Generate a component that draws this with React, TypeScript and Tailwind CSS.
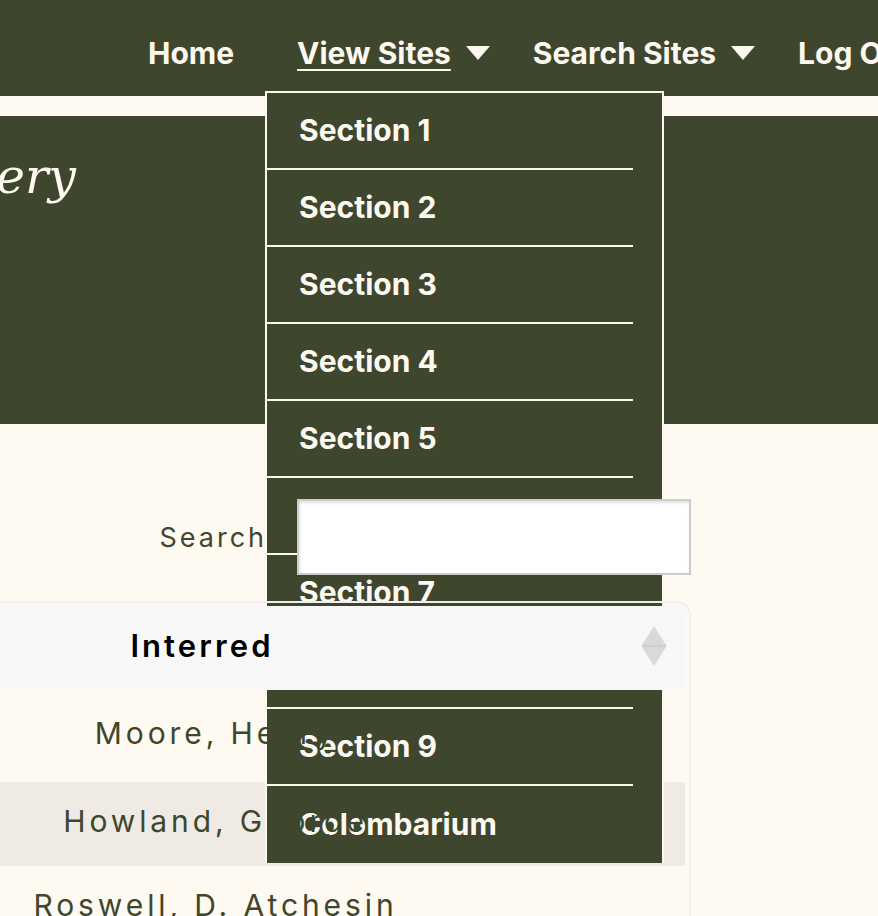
import React from 'react';

const sections = [
  'Section 1',
  'Section 2',
  'Section 3',
  'Section 4',
  'Section 5',
  'Section 6',
  'Section 7',
  'Section 8',
  'Section 9',
  'Colombarium',
];

const rows = ['Moore, Henry', 'Howland, George', 'Roswell, D. Atchesin'];

function Caret() {
  return (
    <svg width="24" height="14" viewBox="0 0 24 14" className="ml-[15px] shrink-0">
      <polygon points="0,0 24,0 12,14" fill="#fdf9f1" />
    </svg>
  );
}

function SortIcon() {
  return (
    <svg width="24" height="40" viewBox="0 0 24 40" className="shrink-0">
      <polygon points="12,0 24,19 0,19" fill="#d9d9d9" />
      <polygon points="0,21 24,21 12,40" fill="#d9d9d9" />
      <rect x="0" y="19" width="24" height="2" fill="#cdcdcd" />
    </svg>
  );
}

export default function App() {
  return (
    <div
      className="min-h-[916px] bg-[#fef9f1] overflow-hidden"
      style={{ fontFamily: 'Inter, "Noto Sans", sans-serif' }}
    >
      <nav className="relative bg-[#3e472d] h-[96px]">
        <ul className="flex items-stretch h-full text-[30px] font-bold text-[#fdf9f1] whitespace-nowrap">
          <li className="ml-[148px] flex items-center pt-[10px]">Home</li>
          <li className="relative ml-[63px] flex items-center pt-[10px]">
            <span className="underline decoration-2 underline-offset-[5px]">View Sites</span>
            <Caret />
            <div className="absolute left-[-32px] top-[91px] z-10 w-[399px] border-2 border-b-0 border-[#fdf9f1] bg-[#3e472d] pr-[29px]">
              <ul>
                {sections.map((s) => (
                  <li
                    key={s}
                    className="h-[77px] flex items-center pl-[32px] border-b-2 border-[#fdf9f1] last:border-b-0 text-[30px]"
                  >
                    {s}
                  </li>
                ))}
              </ul>
            </div>
          </li>
          <li className="ml-[43px] flex items-center pt-[10px]">
            <span>Search Sites</span>
            <Caret />
          </li>
          <li className="ml-[43px] flex items-center pt-[10px]">Log Out</li>
        </ul>
      </nav>

      <div className="h-[20px]" />

      <section className="bg-[#3e472d] h-[308px] pt-[32px]">
        <div className="w-[76px] flex justify-end">
          <h1
            className="shrink-0 whitespace-nowrap italic text-[49px] leading-[1.2] text-[#fdf9f1]"
            style={{ fontFamily: '"DejaVu Serif", serif' }}
          >
            Oakwood Cemetery
          </h1>
        </div>
      </section>

      <main className="ml-[-260px] w-[951px] pt-[75px]">
        <div className="flex items-center justify-end">
          <label className="text-[27px] tracking-[0.11em] text-[#3e472d] mr-[30px] pt-[3px]">Search</label>
          <input
            type="text"
            className="relative z-20 w-[394px] h-[76px] bg-white border-2 border-[#cccccc] shadow-[inset_1px_2px_3px_rgba(0,0,0,0.12)] outline-none"
          />
        </div>

        <div className="mt-[26px]">
          <div className="relative z-20 rounded-t-[14px] border-x-2 border-t-2 border-[#efefef] px-1 pt-[3px]">
            <div className="h-[84px] bg-[#f8f8f8] flex items-center pr-[19px] pb-[4px]">
              <span className="flex-1 text-center text-[31px] font-semibold tracking-[0.1em] text-black pl-[16px]">
                Interred
              </span>
              <SortIcon />
            </div>
          </div>
          <div className="border-x-2 border-[#efefef] px-1 pb-1">
            {rows.map((r, i) => (
              <div
                key={r}
                className={`flex items-center justify-center pb-[5px] ${i === 0 ? 'h-[92px]' : 'h-[84px]'} ${i % 2 === 1 ? 'bg-[#efebe4]' : ''}`}
              >
                <span className="relative z-20 text-[30px] tracking-[0.13em] text-[#3e472d]">{r}</span>
              </div>
            ))}
          </div>
        </div>
      </main>
    </div>
  );
}
